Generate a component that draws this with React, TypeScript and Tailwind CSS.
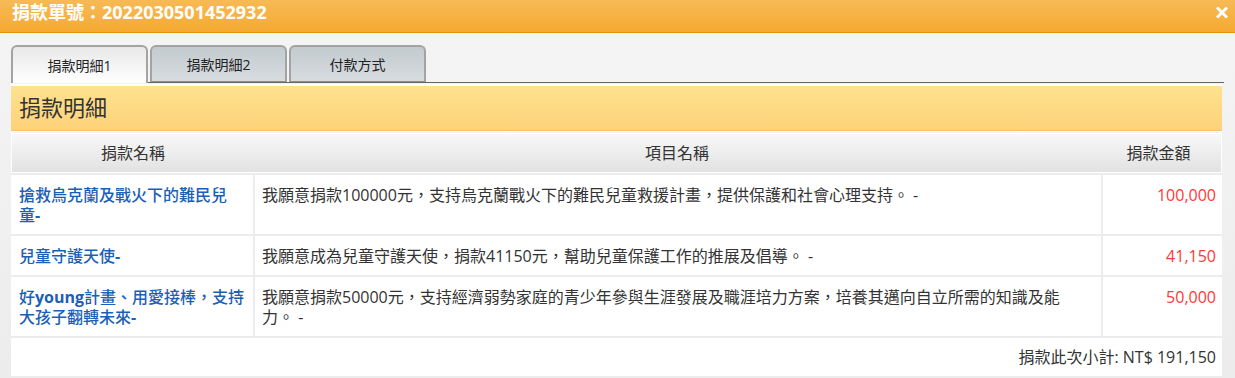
import React from 'react';

const font = { fontFamily: '"Open Sans", "Noto Sans CJK TC", sans-serif' };

const rows = [
  {
    name: '搶救烏克蘭及戰火下的難民兒童-',
    desc: '我願意捐款100000元，支持烏克蘭戰火下的難民兒童救援計畫，提供保護和社會心理支持。 -',
    amount: '100,000',
  },
  {
    name: '兒童守護天使-',
    desc: '我願意成為兒童守護天使，捐款41150元，幫助兒童保護工作的推展及倡導。 -',
    amount: '41,150',
  },
  {
    name: '好young計畫、用愛接棒，支持大孩子翻轉未來-',
    desc: '我願意捐款50000元，支持經濟弱勢家庭的青少年參與生涯發展及職涯培力方案，培養其邁向自立所需的知識及能力。 -',
    amount: '50,000',
  },
];

const tabs = ['捐款明細1', '捐款明細2', '付款方式'];

// latin parts of the name are bold, CJK stays medium
function Name({ text }: { text: string }) {
  const parts = text.split(/([A-Za-z\-]+)/).filter(Boolean);
  return (
    <>
      {parts.map((p, i) =>
        /^[A-Za-z\-]+$/.test(p) ? (
          <span key={i} className="font-bold">{p}</span>
        ) : (
          <span key={i}>{p}</span>
        )
      )}
    </>
  );
}

export default function App() {
  return (
    <div className="w-[1235px] h-[378px] overflow-hidden bg-gradient-to-b from-[#f5f5f5] to-[#ececec]" style={font}>
      {/* Title bar */}
      <div className="h-[33px] flex items-start justify-between pl-[12px] pr-[7px] bg-gradient-to-b from-[#f7ba55] to-[#f5a92f] border-b border-[#e3920f]">
        <h1 className="text-[18px] font-bold text-white leading-[22px] pt-[1px]">捐款單號：2022030501452932</h1>
        <svg width="12" height="11" viewBox="0 0 12 11" className="mt-[7px]">
          <path d="M2 1.5 L10 9.5 M10 1.5 L2 9.5" stroke="white" strokeWidth="3" strokeLinecap="square" />
        </svg>
      </div>

      <div className="pl-[11px] pr-[11px] pt-[12px]">
        {/* Tabs */}
        <div className="flex gap-[2px] h-[38px] border-b border-[#666666]">
          {tabs.map((t, i) => (
            <div
              key={t}
              className={`w-[137px] flex items-center justify-center text-[14px] text-[#222] rounded-t-[6px] border-2 border-[#a3a3a3] ${
                i === 0
                  ? 'border-b-0 -mb-px h-[38px] bg-gradient-to-b from-[#e8e8e8] to-white'
                  : 'border-b border-b-[#8f8f8f] h-[37px] bg-gradient-to-b from-[#c3cbcf] to-[#d7dcdf]'
              }`}
            >
              {t}
            </div>
          ))}
        </div>

        {/* Section heading */}
        <div className="mr-[2px] mt-[1px] border-t-2 border-white h-[47px] flex items-center pl-[8px] bg-gradient-to-b from-[#ffe28f] to-[#fdd279] border-b border-b-[#f6c36b] shadow-[0_1px_0_#fff]">
          <h2 className="text-[22px] text-[#333] leading-none pb-[2px]">捐款明細</h2>
        </div>

        {/* Table */}
        <div className="mt-[2px] mr-[2px] bg-[#ececec]">
          <div className="grid grid-cols-[242px_846px_121px] h-[40px] items-center text-[16px] text-[#333] bg-gradient-to-b from-[#f8f8f8] to-[#e2e2e2] border border-white">
            <div className="text-center">捐款名稱</div>
            <div className="text-center">項目名稱</div>
            <div className="text-center pr-[4px]">捐款金額</div>
          </div>
          <div className="grid grid-cols-[242px_846px_119px] gap-[2px] mt-[2px] text-[16px] leading-[20px]">
            {rows.map((r) => (
              <React.Fragment key={r.amount}>
                <div className="bg-white pl-[8px] pr-[8px] pt-[10px] pb-[9px] text-[#1c5fb6] font-medium">
                  <Name text={r.name} />
                </div>
                <div className="bg-white pl-[7px] pr-[20px] pt-[10px] pb-[9px] text-[#333]">{r.desc}</div>
                <div className="bg-white pr-[6px] pt-[10px] pb-[9px] text-right text-[#ff3838]">{r.amount}</div>
              </React.Fragment>
            ))}
            <div className="col-span-3 bg-white h-[38px] flex items-center justify-end pr-[6px] text-[#333]">
              捐款此次小計: NT$ 191,150
            </div>
          </div>
        </div>
      </div>
    </div>
  );
}
